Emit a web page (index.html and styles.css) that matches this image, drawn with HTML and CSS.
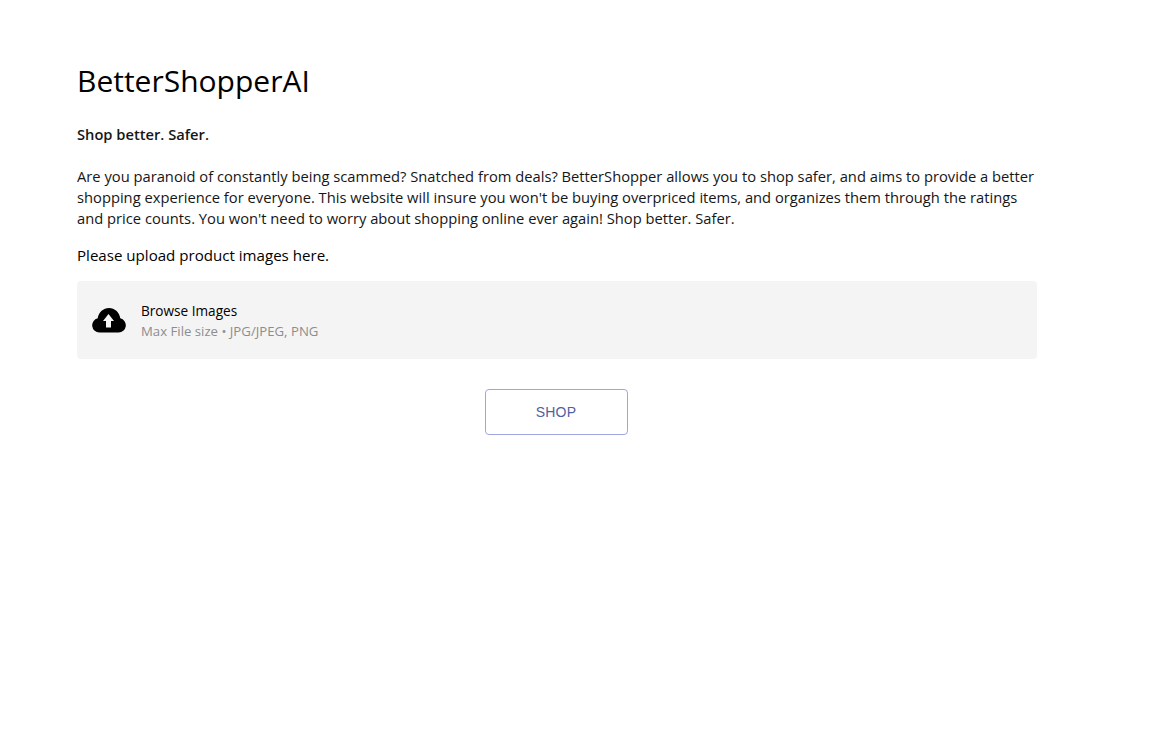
FILE: index.html
```html
<!DOCTYPE html>
<html lang="en">
<head>
<meta charset="utf-8">
<title>BetterShopperAI</title>
<link rel="stylesheet" href="styles.css">
</head>
<body>
<main class="page">
  <h1 class="title">BetterShopperAI</h1>
  <p class="tagline">Shop better. Safer.</p>
  <p class="intro">Are you paranoid of constantly being scammed? Snatched from deals? BetterShopper allows you to shop safer, and aims to provide a better shopping experience for everyone. This website will insure you won't be buying overpriced items, and organizes them through the ratings and price counts. You won't need to worry about shopping online ever again! Shop better. Safer.</p>
  <p class="prompt">Please upload product images here.</p>
  <div class="uploader">
    <svg class="upload-icon" viewBox="0 0 34 25" width="34" height="25"><path fill-rule="evenodd" d="M7.5 24.5A7.2 7.2 0 0 1 5.7 10.3C6.8 4.2 11.3 0 17 0c5.7 0 10.2 4.2 11.3 10.3A7.2 7.2 0 0 1 26.5 24.5zM16.5 6 11 13h3v6.5h5V13h3z"/></svg>
    <div class="upload-text">
      <div class="upload-title">Browse Images</div>
      <div class="upload-sub">Max File size • JPG/JPEG, PNG</div>
    </div>
  </div>
  <div class="actions"><button class="shop" type="button">SHOP</button></div>
</main>
</body>
</html>
```

FILE: styles.css
```css
html, body { margin: 0; padding: 0; background: #fff; }
body { font-family: "Open Sans", "Noto Sans", sans-serif; color: #000; }
.page { width: 960px; margin-left: 77px; padding-top: 61px; }
.title { margin: 0; font-size: 30px; font-weight: 400; line-height: 40px; color: #000; }
.tagline { margin: 24px 0 0; font-size: 14.7px; font-weight: 600; line-height: 18px; color: #161616; }
.intro { margin: 23px 0 0; font-size: 14.73px; font-weight: 400; line-height: 21px; color: #161616; }
.prompt { margin: 16px 0 0; font-size: 15.1px; line-height: 21px; }
.uploader { margin-top: 15px; height: 78px; background: #f4f4f4; border-radius: 4px; display: flex; align-items: center; padding-left: 15px; gap: 15px; }
.upload-icon { fill: #000; display: block; }
.upload-text { padding-top: 2px; }
.upload-title { font-size: 13.6px; line-height: 20px; color: #000; }
.upload-sub { font-size: 13.2px; line-height: 20px; color: #8d8d8d; }
.actions { display: flex; justify-content: center; margin-top: 30px; padding-right: 2px; }
.shop { width: 143px; height: 46px; background: #fff; border: 1px solid #9fa6de; border-radius: 4px; font-family: "Liberation Sans", sans-serif; font-size: 14px; color: #4f5f9f; letter-spacing: .2px; }
```
